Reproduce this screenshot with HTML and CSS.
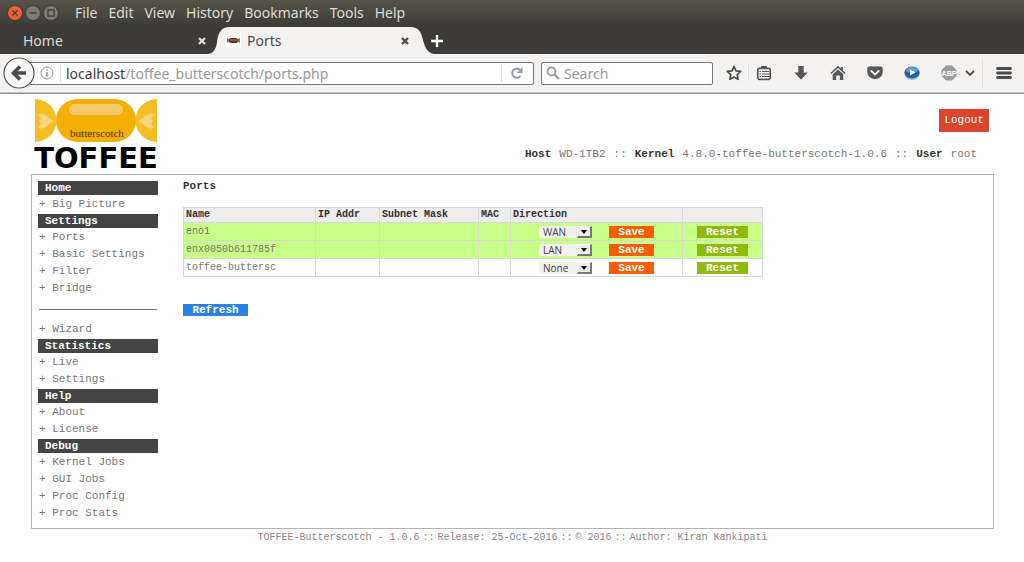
FILE: index.html
```html
<!DOCTYPE html>
<html lang="en">
<head>
<meta charset="utf-8">
<title>Ports</title>
<link rel="stylesheet" href="styles.css">
</head>
<body>
<header class="browser">
  <div class="titlebar">
    <div class="window-buttons">
      <button class="wbtn wbtn-close" aria-label="Close"><svg viewBox="0 0 16 16"><path d="M5 5l6 6M11 5l-6 6"/></svg></button>
      <button class="wbtn" aria-label="Minimize"><svg viewBox="0 0 16 16"><path d="M4 8h8"/></svg></button>
      <button class="wbtn" aria-label="Maximize"><svg viewBox="0 0 16 16"><path d="M4.500 4.500h7v7h-7z"/></svg></button>
    </div>
    <nav class="menus">
      <button>File</button><button>Edit</button><button>View</button><button>History</button><button>Bookmarks</button><button>Tools</button><button>Help</button>
    </nav>
  </div>
  <div class="tabs">
    <div class="tab tab-home">
      <span class="tab-label">Home</span>
      <button class="tab-close" aria-label="Close tab"><svg viewBox="0 0 10 10"><path d="M2 2l6 6M8 2l-6 6"/></svg></button>
    </div>
    <div class="tab tab-active">
      <svg class="tab-shape" viewBox="0 0 226 27" preserveAspectRatio="none"><path d="M0 27C6 26 8 22 9 15C10 6 13 0 22 0H202C211 0 213 5 215 13C217 21 220 26 226 27z"/></svg>
      <svg class="favicon" viewBox="0 0 15 15"><rect width="15" height="15" fill="#fff"/><path d="M1 5l3 1.500h7l3-1.500v5l-3-1.500h-7l-3 1.500z" fill="#9a7258"/><rect x="3" y="5" width="9" height="5" rx="2" fill="#5b3520"/><path d="M4 7h7" stroke="#a27c60"/></svg>
      <span class="tab-label">Ports</span>
      <button class="tab-close" aria-label="Close tab"><svg viewBox="0 0 10 10"><path d="M2 2l6 6M8 2l-6 6"/></svg></button>
    </div>
    <button class="new-tab" aria-label="New tab"><svg viewBox="0 0 14 14"><path d="M7 1v12M1 7h12"/></svg></button>
  </div>
  <div class="toolbar">
    <button class="back" aria-label="Back"><svg viewBox="0 0 32 32"><circle cx="16" cy="16" r="15" fill="#f8f7f6" stroke="#555" stroke-width="1.200"/><path d="M23 16H11M17 9.500l-6.500 6.500 6.500 6.500" fill="none" stroke="#4c4c4c" stroke-width="3.600"/></svg></button>
    <div class="urlbar">
      <svg class="info" viewBox="0 0 14 14"><circle cx="7" cy="7" r="6" fill="none" stroke="#999"/><path d="M7 6v4.500M7 3.500v1.300" stroke="#888" stroke-width="1.400"/></svg>
      <div class="address"><b>localhost</b>/toffee_butterscotch/ports.php</div>
      <button class="reload" aria-label="Reload"><svg viewBox="0 0 14 14"><path d="M10.500 10A4.600 4.600 0 1 1 10 3.800" fill="none" stroke="#8d9caf" stroke-width="2"/><path d="M12.500 1v6H6.800z" fill="#8d9caf"/></svg></button>
    </div>
    <label class="search">
      <svg viewBox="0 0 14 14"><circle cx="5.500" cy="5.500" r="4" fill="none" stroke="#999" stroke-width="1.800"/><path d="M8.500 8.500l4.500 4.500" stroke="#999" stroke-width="2.400"/></svg>
      <input type="text" placeholder="Search" aria-label="Search">
    </label>
    <div class="tools">
      <button class="tool tool-star" aria-label="Bookmark"><svg viewBox="0 0 16 16"><path d="M8 1.500l2 4.300 4.700.6-3.500 3.200.9 4.700L8 12l-4.100 2.300.9-4.700L1.300 6.400 6 5.800z" fill="none" stroke="#4c4c4c" stroke-width="1.700" stroke-linejoin="round"/></svg></button>
      <button class="tool tool-list" aria-label="Bookmarks list"><svg viewBox="0 0 16 16"><rect x="1.800" y="3.300" width="12.400" height="11" rx="1.500" fill="#f8f7f6" stroke="#555" stroke-width="1.700"/><path d="M5 1h6v3H5z" fill="#555"/><path d="M3.500 6.500h1.500M6 6.500h7M3.500 9h1.500M6 9h7M3.500 11.500h1.500M6 11.500h7" stroke="#555" stroke-width="1.200"/></svg></button>
      <button class="tool" aria-label="Downloads"><svg viewBox="0 0 16 16"><path d="M5.300 1h5.400v6.500h4L8 14.800 1.300 7.500h4z" fill="#575757"/></svg></button>
      <button class="tool" aria-label="Home page"><svg viewBox="0 0 16 16"><path d="M8 .8l2.700 2.600V2h2.200v3.500L15.600 8l-1 1.100L8 3 1.400 9.100.4 8z" fill="#575757"/><path d="M8 4.400l5.300 4.900V15H9.800v-4.500H6.200V15H2.700V9.300z" fill="#575757"/></svg></button>
      <button class="tool" aria-label="Pocket"><svg viewBox="0 0 16 16"><path d="M2 1.500h12a1.700 1.700 0 0 1 1.700 1.700V7a7.700 7.200 0 0 1-15.400 0V3.200A1.700 1.700 0 0 1 2 1.500z" fill="#575757"/><path d="M4.300 6l3.700 3.500L11.700 6" fill="none" stroke="#f5f4f2" stroke-width="1.900" stroke-linecap="round"/></svg></button>
      <button class="tool" aria-label="Play"><svg viewBox="0 0 16 16"><ellipse cx="8" cy="9" rx="7.500" ry="6" fill="#a8bdd4"/><ellipse cx="8" cy="7.500" rx="7.600" ry="6" fill="#1c63ad"/><ellipse cx="8" cy="5" rx="6" ry="3" fill="#659bd0"/><path d="M6 4.500l5.500 3L6 10.500z" fill="#fff"/></svg></button>
      <button class="tool" aria-label="Adblock"><svg viewBox="0 0 16 16"><path d="M5 .5h6L15.500 5v6L11 15.500H5L.5 11V5z" fill="#9c9c9c"/><text x="8" y="11" text-anchor="middle" class="abp">ABP</text></svg></button>
      <button class="chevron" aria-label="More"><svg viewBox="0 0 10 10"><path d="M1 3l4 4 4-4" fill="none" stroke="#4c4c4c" stroke-width="1.800"/></svg></button>
      <button class="tool-menu" aria-label="Menu"><svg viewBox="0 0 16 14"><path d="M1.500 2.500h13M1.500 7h13M1.500 11.500h13" stroke="#4c4c4c" stroke-width="2.800" stroke-linecap="round"/></svg></button>
    </div>
  </div>
</header>

<div class="page">
  <div class="masthead">
    <svg class="logo" viewBox="0 0 124 74" role="img" aria-label="Toffee Butterscotch">
      <path d="M1 0a21 21 0 0 1 0 43z" fill="#f6bd24"/>
      <path d="M123 0a21 21 0 0 0 0 43z" fill="#f6bd24"/>
      <g fill="#f6d581"><ellipse cx="10" cy="18" rx="6" ry="2.500" transform="rotate(28 10 18)"/><ellipse cx="12" cy="22" rx="7" ry="2.500"/><ellipse cx="10" cy="26" rx="6" ry="2.500" transform="rotate(-28 10 26)"/><ellipse cx="114" cy="18" rx="6" ry="2.500" transform="rotate(-28 114 18)"/><ellipse cx="112" cy="22" rx="7" ry="2.500"/><ellipse cx="114" cy="26" rx="6" ry="2.500" transform="rotate(28 114 26)"/></g>
      <rect x="22" y="0" width="80" height="43" rx="21.500" fill="#f3af03"/>
      <rect x="35" y="5" width="54" height="11" rx="5.500" fill="#f5c869"/>
      <text x="63" y="38" text-anchor="middle" class="logo-sub">butterscotch</text>
      <text x="62" y="69" text-anchor="middle" class="logo-main">TOFFEE</text>
    </svg>
    <div class="session">
      <button class="logout">Logout</button>
      <div class="host"><b>Host</b><span>WD-1TB2</span><span>::</span><b>Kernel</b><span>4.8.0-toffee-butterscotch-1.0.6</span><span>::</span><b>User</b><span>root</span></div>
    </div>
  </div>

  <div class="frame">
    <nav class="sidebar">
      <h2>Home</h2>
      <ul><li><a href="#">+ Big Picture</a></li></ul>
      <h2>Settings</h2>
      <ul><li><a href="#">+ Ports</a></li><li><a href="#">+ Basic Settings</a></li><li><a href="#">+ Filter</a></li><li><a href="#">+ Bridge</a></li></ul>
      <hr>
      <ul><li><a href="#">+ Wizard</a></li></ul>
      <h2>Statistics</h2>
      <ul><li><a href="#">+ Live</a></li><li><a href="#">+ Settings</a></li></ul>
      <h2>Help</h2>
      <ul><li><a href="#">+ About</a></li><li><a href="#">+ License</a></li></ul>
      <h2>Debug</h2>
      <ul><li><a href="#">+ Kernel Jobs</a></li><li><a href="#">+ GUI Jobs</a></li><li><a href="#">+ Proc Config</a></li><li><a href="#">+ Proc Stats</a></li></ul>
    </nav>
    <main class="content">
      <h1>Ports</h1>
      <table class="ports">
        <colgroup><col class="c-name"><col class="c-ip"><col class="c-mask"><col class="c-mac"><col class="c-dir"><col class="c-reset"></colgroup>
        <thead><tr><th>Name</th><th>IP Addr</th><th>Subnet Mask</th><th>MAC</th><th>Direction</th><th></th></tr></thead>
        <tbody>
          <tr class="up"><td>eno1</td><td></td><td></td><td></td><td><div class="direction"><span class="pick"><select aria-label="Direction of eno1"><option>WAN</option><option>LAN</option><option>None</option></select><i class="arrow"></i></span><button class="btn save">Save</button></div></td><td><button class="btn reset">Reset</button></td></tr>
          <tr class="up"><td>enx0050b611785f</td><td></td><td></td><td></td><td><div class="direction"><span class="pick"><select aria-label="Direction of enx0050b611785f"><option>LAN</option><option>WAN</option><option>None</option></select><i class="arrow"></i></span><button class="btn save">Save</button></div></td><td><button class="btn reset">Reset</button></td></tr>
          <tr><td>toffee-buttersc</td><td></td><td></td><td></td><td><div class="direction"><span class="pick"><select aria-label="Direction of toffee-buttersc"><option>None</option><option>WAN</option><option>LAN</option></select><i class="arrow"></i></span><button class="btn save">Save</button></div></td><td><button class="btn reset">Reset</button></td></tr>
        </tbody>
      </table>
      <button class="btn refresh">Refresh</button>
    </main>
  </div>
  <footer class="footer"><span>TOFFEE-Butterscotch - 1.0.6</span><span>::</span><span>Release: 25-Oct-2016</span><span>::</span><span>© 2016</span><span>::</span><span>Author: Kiran Kankipati</span></footer>
</div>
</body>
</html>
```
FILE: styles.css
```css
* { box-sizing: border-box; }
body { margin: 0; background: #fff; color: #777; font: 11px/17px "Liberation Mono", monospace; }
button { border: 0; padding: 0; margin: 0; background: none; font: inherit; color: inherit; }
svg { display: block; }
h1, h2, ul { margin: 0; padding: 0; }

/* Browser window */
.browser { font: 14px/18px "Noto Sans", sans-serif; background: linear-gradient(#57544b, #3c3b37 26px); border-bottom: 1px solid #8a8a8a; }
.titlebar { display: flex; align-items: center; height: 25px; padding-left: 7px; gap: 16px; color: #dfdbd2; }
.window-buttons { display: flex; gap: 2px; }
.wbtn { width: 16px; height: 16px; border-radius: 8px; background: #7d7b74; border: 1px solid #3b3a36; }
.wbtn-close { background: #ee5f33; }
.wbtn path { fill: none; stroke: #3f3d39; stroke-width: 1.5; }
.menus { display: flex; gap: 11px; }
.tabs { display: flex; height: 29px; padding-top: 2px; }
.tab { position: relative; display: flex; align-items: center; height: 27px; }
.tab-label { flex: 1; }
.tab-home { width: 208px; padding: 0 0 0 23px; color: #dfdbd2; }
.tab-home .tab-close { margin-right: 1px; }
.tab-active { width: 226px; padding: 0 24px 0 18px; gap: 6px; color: #4c4c4c; }
.tab-shape { position: absolute; inset: 0; width: 100%; height: 100%; fill: #f3f2f0; }
.tab-active > :not(.tab-shape) { position: relative; }
.favicon { width: 15px; height: 15px; }
.tab-close svg { width: 10px; height: 10px; }
.tab-close path { fill: none; stroke: currentColor; stroke-width: 2.4; }
.new-tab { width: 14px; margin-left: -4px; color: #fff; }
.new-tab svg { width: 14px; height: 14px; }
.new-tab path { fill: none; stroke: currentColor; stroke-width: 2.4; }
.toolbar { display: flex; align-items: center; height: 39px; padding: 0 12px 0 3px; background: #f3f2f0; border-bottom: 1px solid #c9c8c6; }
.back { position: relative; z-index: 1; }
.back svg { width: 32px; height: 32px; }
.urlbar { flex: 1; display: flex; align-items: center; height: 23px; margin-left: -6px; padding-left: 10px; background: #fff; border: 1px solid #777; border-radius: 2px; }
.info { width: 14px; height: 14px; }
.address { flex: 1; margin-left: 6px; padding-left: 5px; border-left: 1px solid #ddd; color: #999; line-height: 17px; white-space: nowrap; }
.address b { font-weight: 400; color: #3c3c3c; }
.reload { padding: 2px 9px 2px 8px; border-left: 1px solid #ddd; }
.reload svg { width: 14px; height: 14px; }
.search { display: flex; align-items: center; gap: 4px; width: 172px; height: 23px; margin-left: 7px; padding: 0 4px; background: #fff; border: 1px solid #777; border-radius: 2px; }
.search svg { flex: none; width: 14px; height: 14px; }
.search input { flex: 1; min-width: 0; height: 19px; padding: 0; border: 0; background: none; font: inherit; color: #444; }
.search input::placeholder { color: #999; opacity: 1; }
.tools { display: flex; align-items: center; margin-left: 13px; }
.tool { margin-right: 21px; }
.tool svg, .tool-menu svg { width: 16px; height: 16px; }
.tool-star { margin-right: 6px; }
.tool-list { padding-left: 7px; border-left: 1px solid #ddd; }
.tool:nth-last-child(3) { margin-right: 8px; }
.chevron svg { width: 10px; height: 10px; }
.tool-menu { margin-left: 7px; padding: 6px 0 6px 13px; border-left: 1px solid #ddd; }
.abp { font: bold 7px "Liberation Sans", sans-serif; fill: #fff; }

/* Page */
.page { padding: 5px 30px 0 31px; }
.masthead { display: flex; justify-content: space-between; height: 75px; padding: 0 5px 0 3px; }
.logo { width: 124px; height: 74px; overflow: visible; }
.logo-sub { font: 11px "Liberation Serif", serif; fill: #4a3200; }
.logo-main { font: bold 29px "DejaVu Sans", sans-serif; fill: #000; }
.session { display: flex; flex-direction: column; align-items: flex-end; padding-top: 10px; gap: 14px; }
.logout { height: 23px; padding: 0 5px; background: #db4530; color: #fff; }
.host { display: flex; gap: 8px; padding-right: 12px; }
.host b { color: #333; }
.frame { display: flex; gap: 25px; padding: 6px 6px 5px; border: 1px solid #b4b4b4; }
.sidebar { width: 120px; flex: none; }
.sidebar h2 { height: 14px; padding-left: 7px; background: #444; color: #fff; font-size: 11px; line-height: 14px; }
.sidebar ul { list-style: none; padding: 1px 0 1px 1px; }
.sidebar a { color: #777; text-decoration: none; white-space: nowrap; }
.sidebar hr { height: 1px; margin: 11px 1px 10px; border: 0; background: #777; }
.content { flex: 1; min-width: 0; }
h1 { color: #333; font-size: 11px; line-height: 11px; padding-bottom: 15px; }
.ports { border-collapse: collapse; table-layout: fixed; width: 580px; font-size: 10px; line-height: 12px; }
.c-name { width: 132px; }
.c-ip { width: 64px; }
.c-mask { width: 99px; }
.c-mac { width: 32px; }
.c-dir { width: 172px; }
.c-reset { width: 80px; }
.ports th, .ports td { border: 1px solid #d8d8d8; padding: 3px 2px 2px; text-align: left; white-space: nowrap; }
.ports td { height: 17px; }
.ports th { background: #ededed; color: #333; padding: 1px 2px; }
.up { background: #c8ff86; }
.direction { display: flex; align-items: center; padding-left: 26px; gap: 17px; }
.pick { position: relative; width: 53px; height: 12px; }
.pick select { display: block; appearance: none; width: 100%; height: 12px; padding: 0 0 0 4px; border: 0; border-radius: 0; background: #f1f0ee; color: #444; font: 10px/12px "Open Sans", sans-serif; }
.arrow { position: absolute; right: 0; top: 0; width: 15px; height: 12px; background: #efeeec; border: solid; border-width: 1px 2px 2px 1px; border-color: #fff #777 #777 #fff; pointer-events: none; }
.arrow::after { content: ""; position: absolute; left: 3px; top: 3px; border: 3px solid transparent; border-top: 4px solid #000; border-bottom: 0; }
.btn { display: block; height: 12px; padding: 0 8px; color: #fff; font: bold 11px/12px "Liberation Mono", monospace; }
.save { width: 45px; background: #ff5c00; }
.reset { width: 51px; margin: 0 auto; background: #8fbc0c; }
.refresh { width: 65px; margin-top: 27px; background: #2a82e4; }
.footer { display: flex; justify-content: center; gap: 3px; font-size: 10px; color: #888; }
```
